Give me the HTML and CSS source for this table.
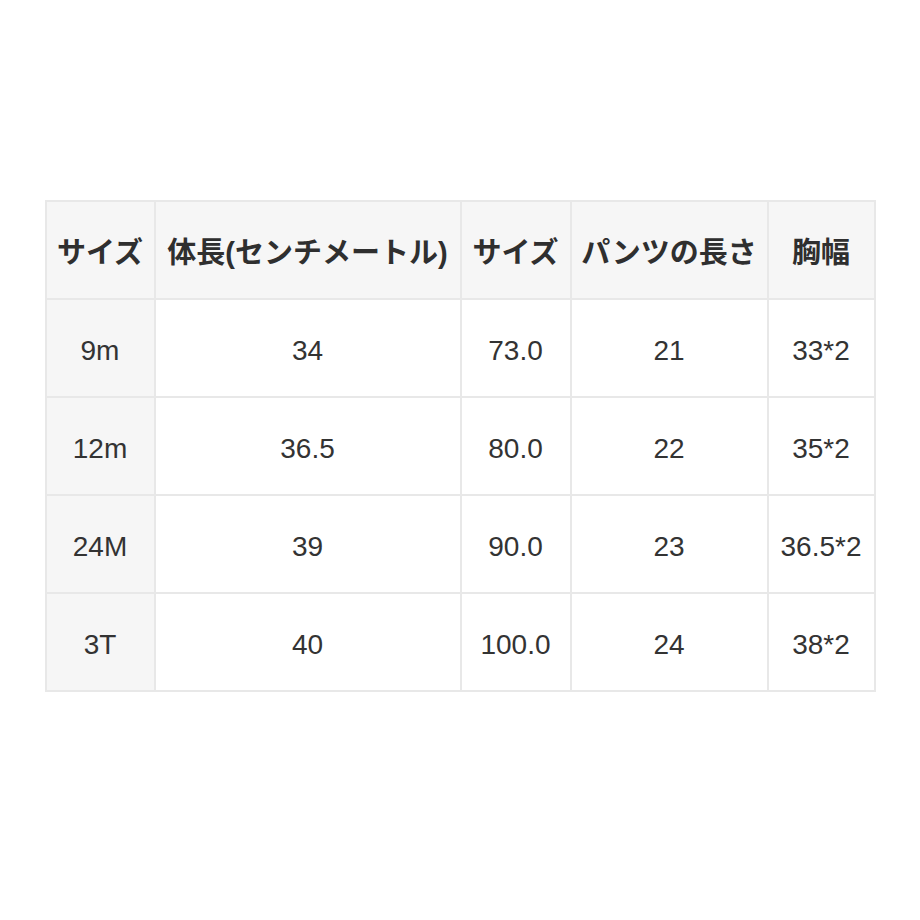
FILE: index.html
```html
<!DOCTYPE html>
<html lang="ja">
<head>
<meta charset="utf-8">
<link rel="stylesheet" href="styles.css">
</head>
<body>
<div class="page">
<table class="size-table">
<colgroup>
<col class="c1"><col class="c2"><col class="c3"><col class="c4"><col class="c5">
</colgroup>
<thead>
<tr><th>サイズ</th><th>体長(センチメートル)</th><th>サイズ</th><th>パンツの長さ</th><th>胸幅</th></tr>
</thead>
<tbody>
<tr><td class="first">9m</td><td>34</td><td>73.0</td><td>21</td><td>33*2</td></tr>
<tr><td class="first">12m</td><td>36.5</td><td>80.0</td><td>22</td><td>35*2</td></tr>
<tr><td class="first">24M</td><td>39</td><td>90.0</td><td>23</td><td>36.5*2</td></tr>
<tr><td class="first">3T</td><td>40</td><td>100.0</td><td>24</td><td>38*2</td></tr>
</tbody>
</table>
</div>
</body>
</html>
```
FILE: styles.css
```css
html, body {
  margin: 0;
  padding: 0;
  background: #ffffff;
}
.page {
  width: 920px;
  height: 920px;
  padding-top: 200px;
  box-sizing: border-box;
}
.size-table {
  margin: 0 auto;
  width: 830px;
  border-collapse: collapse;
  table-layout: fixed;
  font-family: "Liberation Sans", "Noto Sans CJK JP", sans-serif;
  color: #333333;
  font-size: 28px;
  border: 2px solid #e8e8e8;
}
.c1 { width: 109px; }
.c2 { width: 306px; }
.c3 { width: 110px; }
.c4 { width: 197px; }
.c5 { width: 107px; }
.size-table th,
.size-table td {
  border: 2px solid #e8e8e8;
  height: 98px;
  padding: 0;
  text-align: center;
  vertical-align: middle;
  white-space: nowrap;
  box-sizing: border-box;
}
.size-table th {
  background: #f6f6f6;
  font-weight: bold;
  font-size: 29px;
  color: #2f2f2f;
}
.size-table td {
  padding-top: 6px;
}
.size-table td.first {
  background: #f6f6f6;
}
```
